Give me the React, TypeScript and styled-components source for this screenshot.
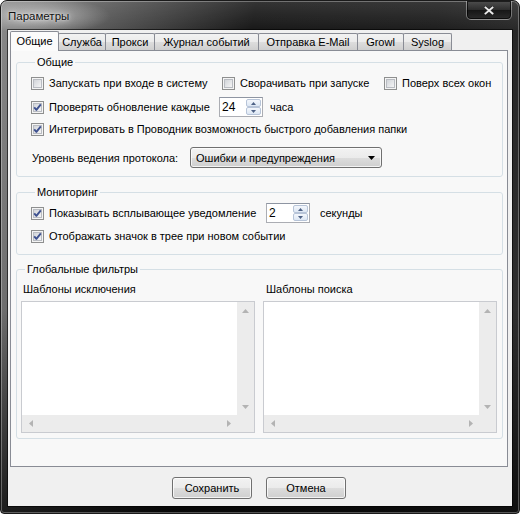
import React from 'react'
import styled, { createGlobalStyle } from 'styled-components'

const GlobalStyle = createGlobalStyle`
  html, body {
    margin: 0;
    padding: 0;
    background: #fff;
  }
  body {
    width: 520px;
    height: 514px;
    overflow: hidden;
    font-family: 'Liberation Sans', Arial, sans-serif;
    font-size: 11px;
    color: #000;
  }
`

const tabs = [
  { name: 'Общие', width: 49 },
  { name: 'Служба', width: 48 },
  { name: 'Прокси', width: 50 },
  { name: 'Журнал событий', width: 105 },
  { name: 'Отправка E-Mail', width: 100 },
  { name: 'Growl', width: 47 },
  { name: 'Syslog', width: 49 },
]

function CheckIcon({ checked }: { checked?: boolean }) {
  return (
    <svg width="13" height="13" viewBox="0 0 13 13" style={{ flex: 'none' }}>
      <defs>
        <linearGradient id="cbg" x1="0" y1="0" x2="1" y2="1">
          <stop offset="0" stopColor="#cfd2d7" />
          <stop offset="1" stopColor="#f7f7f7" />
        </linearGradient>
      </defs>
      <rect x="0.5" y="0.5" width="12" height="12" fill="#f4f4f4" stroke="#8e8f8f" />
      <rect x="2.5" y="2.5" width="8" height="8" fill="url(#cbg)" stroke="#b9bcc2" />
      {checked && (
        <path d="M3.2 6.4 L5.4 8.9 L9.8 3.4" fill="none" stroke="#3f5290" strokeWidth="1.9" strokeLinejoin="round" />
      )}
    </svg>
  )
}

function Check({ label, checked, width }: { label: string; checked?: boolean; width?: number }) {
  return (
    <CheckLabel $width={width}>
      <CheckIcon checked={checked} />
      <span>{label}</span>
    </CheckLabel>
  )
}

function Spinner({ value }: { value: string }) {
  return (
    <Spin>
      <SpinValue>{value}</SpinValue>
      <SpinButtons>
        <SpinBtn>
          <svg width="5" height="3" viewBox="0 0 5 3">
            <path d="M0 3 L2.5 0 L5 3 Z" fill="#4d6185" />
          </svg>
        </SpinBtn>
        <SpinBtn>
          <svg width="5" height="3" viewBox="0 0 5 3">
            <path d="M0 0 L2.5 3 L5 0 Z" fill="#4d6185" />
          </svg>
        </SpinBtn>
      </SpinButtons>
    </Spin>
  )
}

function Arrow({ dir }: { dir: 'up' | 'down' | 'left' | 'right' }) {
  const d = {
    up: 'M0 4 L3.5 0 L7 4 Z',
    down: 'M0 0 L3.5 4 L7 0 Z',
    left: 'M4 0 L0 3.5 L4 7 Z',
    right: 'M0 0 L4 3.5 L0 7 Z',
  }[dir]
  const vertical = dir === 'up' || dir === 'down'
  return (
    <svg width={vertical ? 7 : 4} height={vertical ? 4 : 7} viewBox={vertical ? '0 0 7 4' : '0 0 4 7'}>
      <path d={d} fill="#b3b3b3" />
    </svg>
  )
}

function ListBox() {
  return (
    <List>
      <ListArea />
      <VScroll>
        <ScrollCell>
          <Arrow dir="up" />
        </ScrollCell>
        <ScrollCell>
          <Arrow dir="down" />
        </ScrollCell>
      </VScroll>
      <HScroll>
        <ScrollCell>
          <Arrow dir="left" />
        </ScrollCell>
        <ScrollCell>
          <Arrow dir="right" />
        </ScrollCell>
      </HScroll>
      <Corner />
    </List>
  )
}

export default function App() {
  return (
    <>
      <GlobalStyle />
      <Window>
        <TitleBar>
          <Title>Параметры</Title>
          <CloseButton>
            <svg width="10" height="9" viewBox="0 0 10 9">
              <path d="M1.5 1.5 L8.5 7.5 M8.5 1.5 L1.5 7.5" stroke="#2a2a2a" strokeWidth="3.2" strokeLinecap="square" />
              <path d="M1.5 1.5 L8.5 7.5 M8.5 1.5 L1.5 7.5" stroke="#ededed" strokeWidth="1.8" strokeLinecap="square" />
            </svg>
          </CloseButton>
        </TitleBar>
        <Client>
          <TabStrip>
            {tabs.map((t, i) => (
              <Tab key={t.name} $width={t.width} $active={i === 0}>
                {t.name}
              </Tab>
            ))}
          </TabStrip>
          <Panel>
            <Group $space={8}>
              <Legend>Общие</Legend>
              <Row $top={4}>
                <TopChecks>
                  <Check label="Запускать при входе в систему" />
                  <Check label="Сворачивать при запуске" />
                  <Check label="Поверх всех окон" />
                </TopChecks>
              </Row>
              <Row $top={4}>
                <Check label="Проверять обновление каждые" checked width={188} />
                <Spinner value="24" />
                <Unit $gap={7}>часа</Unit>
              </Row>
              <Row $top={2}>
                <Check label="Интегрировать в Проводник возможность быстрого добавления папки" checked />
              </Row>
              <Row $top={8} $height={21}>
                <FieldLabel>Уровень ведения протокола:</FieldLabel>
                <Combo>
                  <span>Ошибки и предупреждения</span>
                  <svg width="7" height="4" viewBox="0 0 7 4">
                    <path d="M0 0 L7 0 L3.5 4 Z" fill="#000" />
                  </svg>
                </Combo>
              </Row>
            </Group>
            <Group $space={7}>
              <Legend>Мониторинг</Legend>
              <Row $top={4}>
                <Check label="Показывать всплывающее уведомление" checked width={235} />
                <Spinner value="2" />
                <Unit $gap={10}>секунды</Unit>
              </Row>
              <Row $top={3}>
                <Check label="Отображать значок в трее при новом событии" checked />
              </Row>
            </Group>
            <FilterGroup>
              <Legend>Глобальные фильтры</Legend>
              <FilterColumns>
                <FilterColumn>
                  <FilterLabel $indent={2}>Шаблоны исключения</FilterLabel>
                  <ListBox />
                </FilterColumn>
                <FilterColumn>
                  <FilterLabel $indent={3}>Шаблоны поиска</FilterLabel>
                  <ListBox />
                </FilterColumn>
              </FilterColumns>
            </FilterGroup>
          </Panel>
          <ButtonBar>
            <Button>Сохранить</Button>
            <Button>Отмена</Button>
          </ButtonBar>
        </Client>
      </Window>
    </>
  )
}

const Window = styled.div`
  width: 520px;
  height: 514px;
  box-sizing: border-box;
  display: flex;
  flex-direction: column;
  border: 1px solid #1a1a1a;
  border-radius: 7px 7px 4px 4px;
  box-shadow: inset 0 0 0 1px rgba(255, 255, 255, 0.3);
  background:
    radial-gradient(ellipse 70px 18px at 40px 15px, rgba(255, 255, 255, 0.45), transparent),
    linear-gradient(180deg, rgba(255, 255, 255, 0.12) 0%, rgba(0, 0, 0, 0) 30px, rgba(0, 0, 0, 0) 60%, rgba(0, 0, 0, 0.7) 100%),
    linear-gradient(100deg, #8a8a8a 0%, #555 18%, #181818 42%, #1d1d1d 72%, #333 100%);
  overflow: hidden;
`

const TitleBar = styled.div`
  height: 29px;
  display: flex;
  align-items: flex-start;
  flex: none;
`

const Title = styled.div`
  padding: 8px 0 0 7px;
  line-height: 14px;
  font-size: 11.5px;
  color: #111;
  text-shadow: 0 0 6px rgba(255, 255, 255, 0.9), 0 0 2px rgba(255, 255, 255, 0.7);
`

const CloseButton = styled.div`
  margin-left: auto;
  margin-right: 7px;
  width: 46px;
  height: 19px;
  box-sizing: border-box;
  border: 1px solid rgba(255, 255, 255, 0.4);
  border-top: none;
  border-radius: 0 0 5px 5px;
  box-shadow: inset 0 0 0 1px rgba(0, 0, 0, 0.7);
  background: linear-gradient(180deg, rgba(90, 90, 90, 0.6) 0%, rgba(40, 40, 40, 0.6) 48%, rgba(10, 10, 10, 0.7) 52%, rgba(40, 40, 40, 0.6) 100%);
  display: flex;
  align-items: center;
  justify-content: center;
`

const Client = styled.div`
  flex: 1;
  margin: 0 7px 7px 7px;
  background: #f0f0f0;
  box-shadow: 0 0 0 1px rgba(0, 0, 0, 0.6);
  display: flex;
  flex-direction: column;
  padding: 1px 4px 0 2px;
  min-height: 0;
`

const TabStrip = styled.div`
  height: 19px;
  display: flex;
  align-items: flex-end;
  flex: none;
  position: relative;
  z-index: 1;
`

const Tab = styled.div<{ $width: number; $active?: boolean }>`
  width: ${(p) => p.$width}px;
  height: ${(p) => (p.$active ? 20 : 17)}px;
  margin-bottom: ${(p) => (p.$active ? -1 : 0)}px;
  box-sizing: border-box;
  border: 1px solid #898c95;
  border-bottom: none;
  border-radius: 2px 2px 0 0;
  background: ${(p) =>
    p.$active ? '#fbfbfb' : 'linear-gradient(180deg, #f2f2f2 0%, #ebebeb 50%, #dddddd 51%, #cfcfcf 100%)'};
  display: flex;
  align-items: center;
  justify-content: center;
  padding-bottom: ${(p) => (p.$active ? 1 : 0)}px;
  white-space: nowrap;
  flex: none;

  & + & {
    margin-left: -1px;
  }
`

const Panel = styled.div`
  flex: 1;
  box-sizing: border-box;
  border: 1px solid #898c95;
  background: #f8f8f8;
  padding: 4px 4px 0 5px;
  display: flex;
  flex-direction: column;
`

const Group = styled.fieldset<{ $space: number }>`
  margin: 0 0 ${(p) => p.$space}px 0;
  min-width: 0;
  padding: 0 14px 8px 14px;
  border: 1px solid #d5dfe5;
  border-radius: 3px;
  display: flex;
  flex-direction: column;
`

const Legend = styled.legend`
  padding: 0 2px;
  margin-left: 4px;
  line-height: 14px;
`

const Row = styled.div<{ $top: number; $height?: number }>`
  margin-top: ${(p) => p.$top}px;
  height: ${(p) => p.$height ?? 20}px;
  display: flex;
  align-items: center;
`

const TopChecks = styled.div`
  display: grid;
  grid-template-columns: 191px 162px auto;
  align-items: center;
`

const CheckLabel = styled.label<{ $width?: number }>`
  display: flex;
  align-items: center;
  gap: 5px;
  white-space: nowrap;
  ${(p) => (p.$width ? `width: ${p.$width}px; flex: none;` : '')}
`

const Spin = styled.div`
  width: 44px;
  height: 20px;
  box-sizing: border-box;
  border: 1px solid #abadb3;
  border-top-color: #8e95a2;
  background: #fff;
  display: flex;
  flex: none;
`

const SpinValue = styled.span`
  flex: 1;
  padding-left: 2px;
  line-height: 18px;
  font-size: 12px;
`

const SpinButtons = styled.div`
  width: 15px;
  display: flex;
  flex-direction: column;
  padding: 1px 1px 1px 0;
`

const SpinBtn = styled.span`
  flex: 1;
  box-sizing: border-box;
  border: 1px solid #b7c4d8;
  border-radius: 2px;
  background: linear-gradient(180deg, #f4f7fc 0%, #dde7f4 100%);
  display: flex;
  align-items: center;
  justify-content: center;
`

const Unit = styled.span<{ $gap: number }>`
  margin-left: ${(p) => p.$gap}px;
`

const FieldLabel = styled.span`
  width: 158px;
  padding-left: 1px;
  flex: none;
  white-space: nowrap;
`

const Combo = styled.div`
  width: 192px;
  height: 21px;
  box-sizing: border-box;
  border: 1px solid #707070;
  border-radius: 3px;
  box-shadow: inset 0 0 0 1px rgba(255, 255, 255, 0.75);
  background: linear-gradient(180deg, #f2f2f2 0%, #ebebeb 50%, #dddddd 51%, #cfcfcf 100%);
  display: flex;
  align-items: center;
  justify-content: space-between;
  padding: 0 6px 0 5px;
`

const FilterGroup = styled.fieldset`
  margin: 0;
  min-width: 0;
  padding: 0 5px 5px 4px;
  border: 1px solid #d5dfe5;
  border-radius: 3px;
`

const FilterColumns = styled.div`
  display: grid;
  grid-template-columns: 1fr 1fr;
  gap: 8px;
`

const FilterColumn = styled.div`
  display: flex;
  flex-direction: column;
`

const FilterLabel = styled.div<{ $indent: number }>`
  margin-top: 6px;
  padding-left: ${(p) => p.$indent}px;
  line-height: 14px;
  height: 14px;
  margin-bottom: 5px;
`

const List = styled.div`
  height: 132px;
  box-sizing: border-box;
  border: 1px solid #c9cbd0;
  background: #fff;
  display: grid;
  grid-template-columns: 1fr 17px;
  grid-template-rows: 1fr 17px;
`

const ListArea = styled.div`
  background: #fff;
`

const VScroll = styled.div`
  background: #ececec;
  display: flex;
  flex-direction: column;
  justify-content: space-between;
`

const HScroll = styled.div`
  background: #ececec;
  display: flex;
  justify-content: space-between;
`

const ScrollCell = styled.div`
  width: 17px;
  height: 17px;
  display: flex;
  align-items: center;
  justify-content: center;
`

const Corner = styled.div`
  background: #ececec;
`

const ButtonBar = styled.div`
  height: 39px;
  flex: none;
  box-sizing: border-box;
  padding-top: 10px;
  display: flex;
  justify-content: center;
  align-items: flex-start;
  gap: 14px;
`

const Button = styled.div`
  width: 80px;
  height: 22px;
  box-sizing: border-box;
  border: 1px solid #707070;
  border-radius: 3px;
  box-shadow: inset 0 0 0 1px rgba(255, 255, 255, 0.75);
  background: linear-gradient(180deg, #f2f2f2 0%, #ebebeb 50%, #dddddd 51%, #cfcfcf 100%);
  display: flex;
  align-items: center;
  justify-content: center;
`
